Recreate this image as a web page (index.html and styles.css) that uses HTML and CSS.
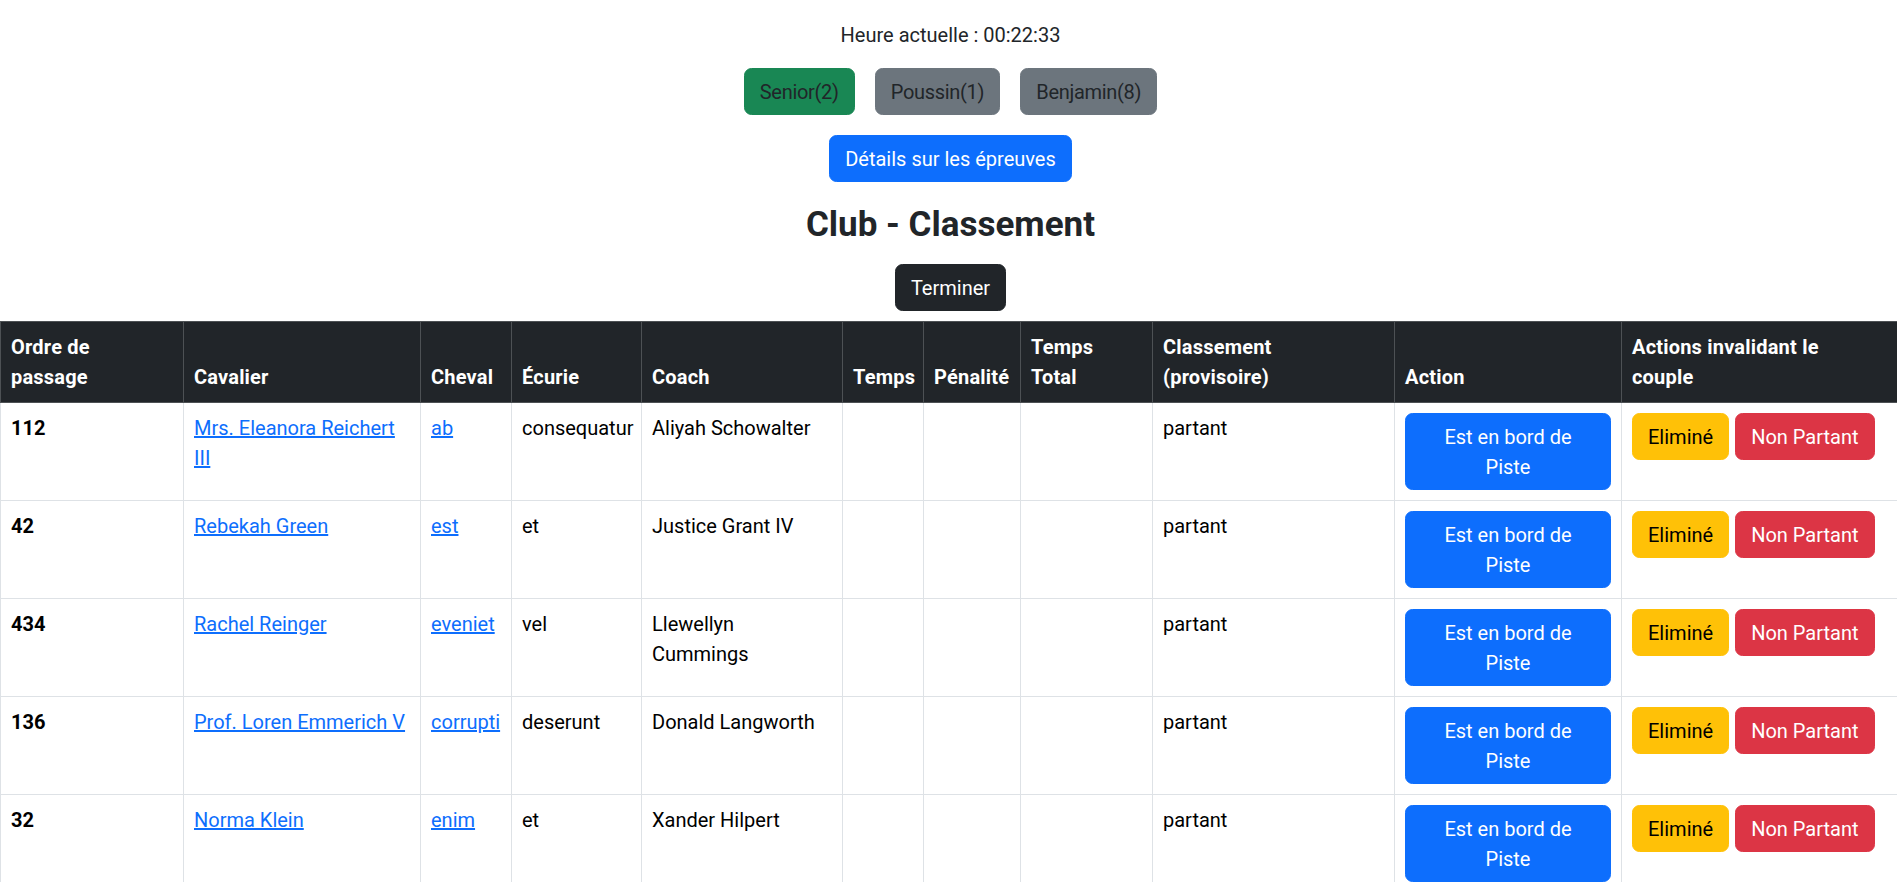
FILE: index.html
```html
<!DOCTYPE html>
<html lang="fr">
<head>
<meta charset="utf-8">
<title>Club - Classement</title>
<link rel="stylesheet" href="styles.css">
</head>
<body>
<div class="top">
  <p class="clock">Heure actuelle : 00:22:33</p>
  <div class="cats">
    <button class="btn btn-success">Senior(2)</button>
    <button class="btn btn-secondary">Poussin(1)</button>
    <button class="btn btn-secondary">Benjamin(8)</button>
  </div>
  <div class="details-row">
    <button class="btn btn-primary">Détails sur les épreuves</button>
  </div>
  <h3 class="title">Club - Classement</h3>
  <div class="finish-row">
    <button class="btn btn-dark">Terminer</button>
  </div>
</div>
<table class="results">
  <colgroup>
    <col class="c1"><col class="c2"><col class="c3"><col class="c4"><col class="c5"><col class="c6"><col class="c7"><col class="c8"><col class="c9"><col class="c10"><col class="c11">
  </colgroup>
  <thead>
    <tr>
      <th>Ordre de passage</th>
      <th>Cavalier</th>
      <th>Cheval</th>
      <th>Écurie</th>
      <th>Coach</th>
      <th>Temps</th>
      <th>Pénalité</th>
      <th>Temps Total</th>
      <th>Classement (provisoire)</th>
      <th>Action</th>
      <th>Actions invalidant le couple</th>
    </tr>
  </thead>
  <tbody>
    <tr>
      <th class="order">112</th>
      <td><a href="#">Mrs. Eleanora Reichert III</a></td>
      <td><a href="#">ab</a></td>
      <td>consequatur</td>
      <td>Aliyah Schowalter</td>
      <td></td><td></td><td></td>
      <td>partant</td>
      <td><button class="btn btn-primary btn-block">Est en bord de Piste</button></td>
      <td><div class="inval"><button class="btn btn-warning">Eliminé</button><button class="btn btn-danger">Non Partant</button></div></td>
    </tr>
    <tr>
      <th class="order">42</th>
      <td><a href="#">Rebekah Green</a></td>
      <td><a href="#">est</a></td>
      <td>et</td>
      <td>Justice Grant IV</td>
      <td></td><td></td><td></td>
      <td>partant</td>
      <td><button class="btn btn-primary btn-block">Est en bord de Piste</button></td>
      <td><div class="inval"><button class="btn btn-warning">Eliminé</button><button class="btn btn-danger">Non Partant</button></div></td>
    </tr>
    <tr>
      <th class="order">434</th>
      <td><a href="#">Rachel Reinger</a></td>
      <td><a href="#">eveniet</a></td>
      <td>vel</td>
      <td>Llewellyn Cummings</td>
      <td></td><td></td><td></td>
      <td>partant</td>
      <td><button class="btn btn-primary btn-block">Est en bord de Piste</button></td>
      <td><div class="inval"><button class="btn btn-warning">Eliminé</button><button class="btn btn-danger">Non Partant</button></div></td>
    </tr>
    <tr>
      <th class="order">136</th>
      <td><a href="#">Prof. Loren Emmerich V</a></td>
      <td><a href="#">corrupti</a></td>
      <td>deserunt</td>
      <td>Donald Langworth</td>
      <td></td><td></td><td></td>
      <td>partant</td>
      <td><button class="btn btn-primary btn-block">Est en bord de Piste</button></td>
      <td><div class="inval"><button class="btn btn-warning">Eliminé</button><button class="btn btn-danger">Non Partant</button></div></td>
    </tr>
    <tr>
      <th class="order">32</th>
      <td><a href="#">Norma Klein</a></td>
      <td><a href="#">enim</a></td>
      <td>et</td>
      <td>Xander Hilpert</td>
      <td></td><td></td><td></td>
      <td>partant</td>
      <td><button class="btn btn-primary btn-block">Est en bord de Piste</button></td>
      <td><div class="inval"><button class="btn btn-warning">Eliminé</button><button class="btn btn-danger">Non Partant</button></div></td>
    </tr>
  </tbody>
</table>
</body>
</html>
```

FILE: styles.css
```css
* { box-sizing: border-box; }

html, body {
  margin: 0;
  padding: 0;
  background: #fff;
}

body {
  font-family: Roboto, "Liberation Sans", sans-serif;
  font-size: 20px;
  line-height: 1.5;
  color: #212529;
}

.top {
  text-align: center;
  padding-left: 4px;
}

.clock {
  margin: 0;
  padding-top: 20px;
}

.cats {
  display: flex;
  justify-content: center;
  gap: 20px;
  margin-top: 18px;
}

.cats .btn {
  letter-spacing: -0.3px;
}

.details-row {
  margin-top: 20px;
}

.title {
  margin: 22px 0 0;
  font-size: 35px;
  line-height: 42px;
  font-weight: 700;
  color: #212529;
}

.finish-row {
  margin-top: 18px;
  margin-bottom: 10px;
}

.btn {
  display: inline-block;
  font-family: inherit;
  font-size: 20px;
  line-height: 30px;
  padding: 7.5px 15px;
  border: 1px solid transparent;
  border-radius: 7.5px;
  cursor: pointer;
  text-align: center;
  vertical-align: middle;
  color: #212529;
  background: transparent;
}

.btn-success { background: #198754; border-color: #198754; color: #212529; }
.btn-secondary { background: #6c757d; border-color: #6c757d; color: #212529; }
.btn-primary { background: #0d6efd; border-color: #0d6efd; color: #fff; }
.btn-dark { background: #212529; border-color: #212529; color: #fff; }
.btn-warning { background: #ffc107; border-color: #ffc107; color: #000; }
.btn-danger { background: #dc3545; border-color: #dc3545; color: #fff; }

.btn-block { width: 100%; }

.results {
  width: 1897px;
  table-layout: fixed;
  border-collapse: collapse;
  vertical-align: top;
  color: #000;
}

.c1 { width: 183px; }
.c2 { width: 237px; }
.c3 { width: 91px; }
.c4 { width: 130px; }
.c5 { width: 201px; }
.c6 { width: 81px; }
.c7 { width: 97px; }
.c8 { width: 132px; }
.c9 { width: 242px; }
.c10 { width: 227px; }
.c11 { width: 276px; }

.results th,
.results td {
  padding: 10px;
  border: 1px solid #dee2e6;
  text-align: left;
  vertical-align: top;
}

.results thead th {
  background: #212529;
  color: #fff;
  font-weight: 700;
  vertical-align: bottom;
  border-color: #4d5154;
  padding-right: 25px;
  letter-spacing: 0.2px;
}

.results thead tr {
  border-top: 1px solid #373b3e;
}

.results tbody th.order {
  font-weight: 700;
}

.results tbody td a {
  color: #0d6efd;
  text-decoration: underline;
}

.inval {
  display: flex;
  gap: 6px;
  align-items: flex-start;
}
```
